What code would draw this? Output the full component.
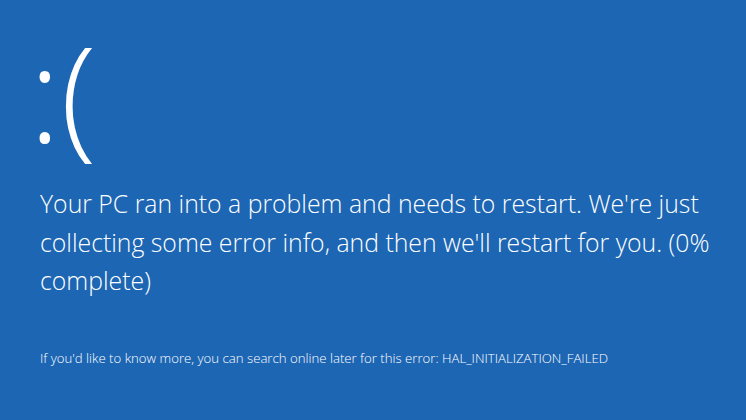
export default function App() {
  return (
    <div className="h-[420px] w-[746px] overflow-hidden bg-[#1d66b4] text-white font-['Open_Sans',sans-serif]">
      <div className="pl-[40px] pt-[18px]">
        {/* the sad face */}
        <div className="-ml-[11px] h-[148px] text-[132px] font-light leading-[148px] tracking-[0px]">:(</div>

        <p className="mt-[18px] w-[690px] text-[24.8px] font-light leading-[38.5px]">
          Your PC ran into a problem and needs to restart. We're just collecting some error info,
          and then we'll restart for you. (0% complete)
        </p>

        <p className="mt-[49px] text-[13.2px] leading-[18px] font-light">
          If you'd like to know more, you can search online later for this error: HAL_INITIALIZATION_FAILED
        </p>
      </div>
    </div>
  )
}
